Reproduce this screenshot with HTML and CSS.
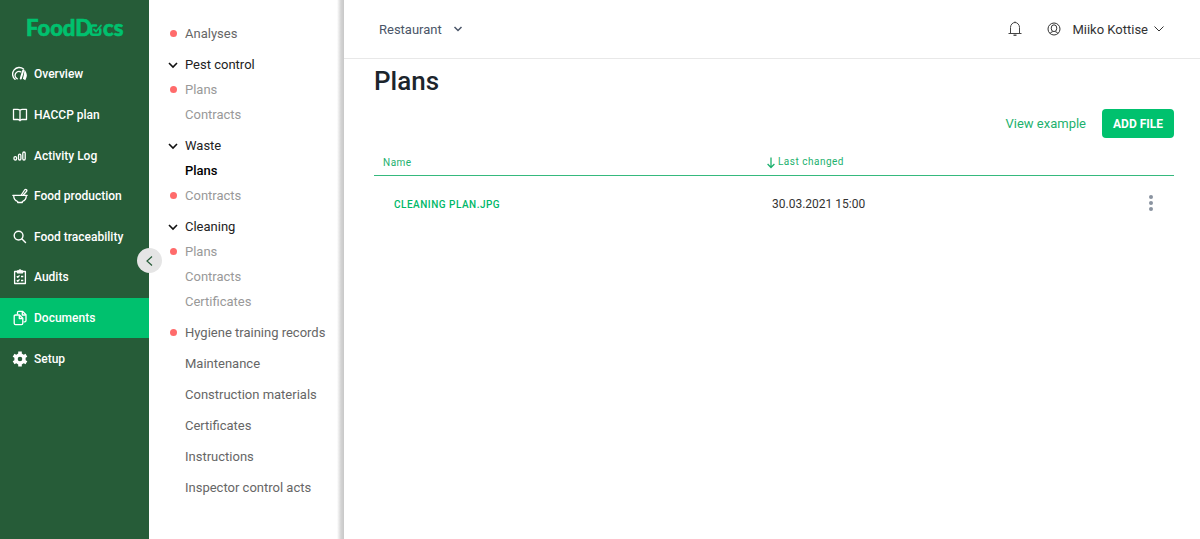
FILE: index.html
```html
<!DOCTYPE html>
<html lang="en">

<head>
  <meta charset="utf8">
  <meta name="viewport" content="width=device-width, initial-scale=1.0">
  <title>FoodDocs - Plans</title>
  <link rel="stylesheet" href="styles.css">
</head>

<body>
  <div class="app">
    <aside class="sidebar">
      <a class="logo" href="#" aria-label="FoodDocs">
        <svg width="110" height="36" viewBox="0 0 110 36">
          <text x="1" y="26">FoodD</text>
          <g fill="none" stroke="currentColor" stroke-width="2.6" stroke-linecap="round" stroke-linejoin="round">
            <path d="M71 15.500h-3q-2 0-2 2v5q0 2.200 2 2.200h5q2.200 0 2.200-2.200v-3" />
            <path d="M69 19.500l2 2 5-6" stroke-width="1.800" />
          </g>
          <text x="78" y="26">cs</text>
        </svg>
      </a>
      <nav class="nav">
        <a href="#">
          <svg width="16" height="16" viewBox="0 0 16 16" fill="none" stroke="currentColor" stroke-width="1.400" stroke-linecap="round">
            <path d="M3 13.200A6.300 6.300 0 0 1 11.500 3" />
            <path d="M5.300 12.800A3.800 3.800 0 0 1 8.800 5.800" />
            <path d="M11.200 4.500L8.800 12.500" stroke-width="2" />
            <path d="M13 5.500q2.300 3.700 0 7.700l-1.300-.7q.9-3.500 1.300-7z" fill="currentColor" />
          </svg>
          Overview
        </a>
        <a href="#">
          <svg width="16" height="16" viewBox="0 0 16 16" fill="none" stroke="currentColor" stroke-width="1.300" stroke-linejoin="round">
            <path d="M8 3.200q-1-.9-2.500-.9H1.500v10.200h4.500q1.300 0 2 1.200.700-1.200 2-1.200h4.500V2.300h-4Q9 2.300 8 3.200zV13.500" />
          </svg>
          HACCP plan
        </a>
        <a href="#">
          <svg width="16" height="16" viewBox="0 0 16 16" fill="none" stroke="currentColor" stroke-width="1.300">
            <rect x="2" y="8.600" width="2.600" height="3.400" rx="1.200" />
            <rect x="6.500" y="6.200" width="2.400" height="5.800" rx="1.200" />
            <rect x="10.800" y="4" width="2.400" height="8" rx="1.200" />
          </svg>
          Activity Log
        </a>
        <a href="#">
          <svg width="16" height="16" viewBox="0 0 16 16" fill="none" stroke="currentColor" stroke-width="1.300" stroke-linecap="round" stroke-linejoin="round">
            <path d="M.8 7.300h14.400M1.700 7.500c0 3.500 1.800 5.300 4 6v1h4.600v-1c2.200-.7 4-2.500 4-6" />
            <path d="M9.300 7l3.300-5q1-1 1.900-.3.800.8-.1 1.800L11.300 7" />
          </svg>
          Food production
        </a>
        <a href="#">
          <svg width="16" height="16" viewBox="0 0 16 16" fill="none" stroke="currentColor" stroke-width="1.400" stroke-linecap="round">
            <circle cx="6.600" cy="6.600" r="4.400" />
            <path d="M10 10l3.500 3.500" />
          </svg>
          Food traceability
        </a>
        <a href="#">
          <svg width="16" height="16" viewBox="0 0 16 16" fill="none" stroke="currentColor" stroke-width="1.300" stroke-linejoin="round">
            <path d="M5.500 2.500H2.600v12h10.800v-12h-2.900" />
            <path d="M5.500 1.800h1.300q1.200-1.800 2.400 0h1.300v2h-5z" fill="currentColor" />
            <path d="M4.800 7.300l1 1 1.700-2M4.800 11.300l1 1 1.700-2M9 7.500h2.300M9 11.500h2.300" />
          </svg>
          Audits
        </a>
        <a class="active" href="#">
          <svg width="16" height="16" viewBox="0 0 16 16" fill="none" stroke="currentColor" stroke-width="1.300" stroke-linejoin="round">
            <path d="M5.500 4.500V2.500q0-1.200 1.200-1.200h3.800l3.500 3.500v5.700q0 1.300-1.300 1.300h-1.200" />
            <path d="M10.300 1.500v3.500h3.500" />
            <path d="M7.500 5H3.500Q2.200 5 2.200 6.300v7q0 1.300 1.300 1.300h6q1.300 0 1.300-1.300V8.300z" />
            <path d="M7.300 5.200v3.300h3.300" />
          </svg>
          Documents
        </a>
        <a href="#">
          <svg width="16" height="16" viewBox="0 0 16 16" fill="none" stroke="currentColor">
            <circle cx="8" cy="8" r="4" stroke-width="3.400" />
            <path d="M8 .6v3M8 12.400v3M1.600 4.300l2.600 1.500M11.800 10.200l2.600 1.500M1.600 11.700l2.600-1.500M11.800 5.800l2.600-1.500" stroke-width="3.600" />
          </svg>
          Setup
        </a>
      </nav>
      <button class="collapse" type="button" aria-label="Collapse menu">
        <svg width="12" height="12" viewBox="0 0 12 12" fill="none" stroke="currentColor" stroke-width="1.200">
          <path d="M8 1.500L3 6l5 4.500" />
        </svg>
      </button>
    </aside>

    <nav class="submenu">
      <a class="item alert" href="#">Analyses</a>
      <a class="item group" href="#"><svg width="10" height="8" viewBox="0 0 10 8"><path d="M1 2l4 4 4-4" /></svg>Pest control</a>
      <a class="sub alert" href="#">Plans</a>
      <a class="sub" href="#">Contracts</a>
      <a class="item group" href="#"><svg width="10" height="8" viewBox="0 0 10 8"><path d="M1 2l4 4 4-4" /></svg>Waste</a>
      <a class="sub current" href="#">Plans</a>
      <a class="sub alert" href="#">Contracts</a>
      <a class="item group" href="#"><svg width="10" height="8" viewBox="0 0 10 8"><path d="M1 2l4 4 4-4" /></svg>Cleaning</a>
      <a class="sub alert" href="#">Plans</a>
      <a class="sub" href="#">Contracts</a>
      <a class="sub" href="#">Certificates</a>
      <a class="item alert" href="#">Hygiene training records</a>
      <a class="item" href="#">Maintenance</a>
      <a class="item" href="#">Construction materials</a>
      <a class="item" href="#">Certificates</a>
      <a class="item" href="#">Instructions</a>
      <a class="item" href="#">Inspector control acts</a>
    </nav>

    <div class="content">
      <header class="topbar">
        <button class="place" type="button">
          Restaurant
          <svg width="10" height="8" viewBox="0 0 10 8" fill="none" stroke="currentColor" stroke-width="1.500"><path d="M1.500 2L5 5.500 8.500 2" /></svg>
        </button>
        <button class="bell" type="button" aria-label="Notifications">
          <svg width="14" height="16" viewBox="0 0 14 16" fill="none" stroke="currentColor">
            <path d="M.5 12.500h13M2.500 12.500V6.500a4.500 5 0 0 1 9 0v6M7 .5v1" />
            <path d="M5.500 14.200h3" stroke-width="1.400" />
          </svg>
        </button>
        <button class="user" type="button">
          <svg width="14" height="14" viewBox="0 0 14 14" fill="none" stroke="currentColor">
            <circle cx="7" cy="7" r="6" />
            <ellipse cx="7" cy="6.200" rx="2.800" ry="3.400" />
            <path d="M3 11.500q.3-1.200 2.700-1.800M11 11.500q-.3-1.200-2.700-1.800" />
          </svg>
          <span>Miiko Kottise</span>
          <svg width="10" height="8" viewBox="0 0 10 8" fill="none" stroke="currentColor"><path d="M.5 1.500L5 6l4.500-4.500" /></svg>
        </button>
      </header>

      <main class="page">
        <h1>Plans</h1>
        <div class="actions">
          <a href="#">View example</a>
          <button class="add" type="button">ADD FILE</button>
        </div>
        <table class="files">
          <thead>
            <tr>
              <th class="name">Name</th>
              <th class="changed">
                <svg width="8" height="12" viewBox="0 0 8 12" fill="none" stroke="currentColor" stroke-width="1.300"><path d="M4 .5v10M.6 7L4 10.500 7.400 7" /></svg>
                Last changed
              </th>
              <th class="menu"></th>
            </tr>
          </thead>
          <tbody>
            <tr>
              <td><a href="#">CLEANING PLAN.JPG</a></td>
              <td>30.03.2021 15:00</td>
              <td class="menu">
                <button type="button" aria-label="File options">
                  <svg width="4" height="16" viewBox="0 0 4 16" fill="currentColor">
                    <circle cx="2" cy="2" r="2" />
                    <circle cx="2" cy="8" r="2" />
                    <circle cx="2" cy="14" r="2" />
                  </svg>
                </button>
              </td>
            </tr>
          </tbody>
        </table>
      </main>
    </div>
  </div>
</body>

</html>
```
FILE: styles.css
```css
html,
body {
  margin: 0;
}

body {
  font-family: Roboto, Arial, sans-serif;
  font-size: 13px;
  color: #333;
  background-color: #fff;
}

a {
  color: inherit;
  text-decoration: none;
}

button {
  padding: 0;
  border: 0;
  background: none;
  font: inherit;
  color: inherit;
  cursor: pointer;
}

svg {
  flex: none;
}

.app {
  display: flex;
  min-height: 100vh;
}

.sidebar {
  position: relative;
  flex: none;
  width: 149px;
  color: #fff;
  background-color: #265c38;
}

.logo {
  display: flex;
  padding: 10px 0 8px 25px;
  color: #00c16e;
}

.logo text {
  font-family: Lato, sans-serif;
  font-size: 22px;
  font-weight: 900;
  fill: currentColor;
  stroke: currentColor;
  stroke-width: 0.6;
}

.nav {
  display: grid;
  grid-auto-rows: 1fr;
  height: 325px;
}

.nav a {
  display: flex;
  align-items: center;
  gap: 6px;
  padding-left: 12px;
  font-size: 12px;
  font-weight: 500;
}

.nav .active {
  background-color: #00c16e;
}

/* sits over the edge between the two menus */
.collapse {
  position: absolute;
  top: 248px;
  right: -13px;
  z-index: 1;
  display: flex;
  align-items: center;
  justify-content: center;
  width: 25px;
  height: 25px;
  border-radius: 50%;
  color: #265c38;
  background-color: #e5e5e5;
}

.submenu {
  flex: none;
  box-sizing: border-box;
  width: 195px;
  padding-top: 15px;
  line-height: 25px;
  background: linear-gradient(to left, #c8c8c8, #d4d4d4 3px, #fff 7px);
}

.submenu a {
  display: flex;
  align-items: center;
  padding-left: 36px;
}

.submenu .item {
  margin-top: 6px;
  color: #666;
}

.submenu .sub {
  color: #999;
}

.submenu .alert::before {
  content: '';
  width: 7px;
  height: 7px;
  margin-right: 8px;
  border-radius: 50%;
  background-color: #ff6b6b;
}

.submenu .alert {
  padding-left: 21px;
}

.submenu .group {
  gap: 7px;
  padding-left: 19px;
  color: #222;
}

.submenu .group svg {
  fill: none;
  stroke: #111;
  stroke-width: 1.6;
}

.submenu .current {
  font-weight: 500;
  color: #000;
}

.content {
  flex: 1;
}

.topbar {
  display: flex;
  align-items: center;
  height: 58px;
  padding: 0 36px 0 35px;
  border-bottom: 1px solid #e8e8e8;
}

.place,
.user {
  display: flex;
  align-items: center;
}

.place {
  gap: 11px;
  margin-right: auto;
  color: #4a5568;
}

.bell {
  display: flex;
  margin-right: 25px;
  color: #444;
}

.user {
  gap: 6px;
}

.user span {
  margin-left: 5px;
}

.page {
  padding: 7px 26px 0 30px;
}

h1 {
  margin: 0;
  font-size: 26px;
  line-height: 30px;
  font-weight: 500;
  color: #1c252c;
}

.actions {
  display: flex;
  align-items: center;
  justify-content: flex-end;
  gap: 16px;
  margin-top: 13px;
  color: #1db16e;
}

.add {
  height: 29px;
  padding: 0 11px;
  border-radius: 4px;
  font-size: 12px;
  font-weight: 700;
  color: #fff;
  background-color: #00c16e;
}

.files {
  width: 100%;
  margin-top: 12px;
  border-collapse: collapse;
  table-layout: fixed;
}

.files th {
  height: 25px;
  padding: 0 0 0 9px;
  border-bottom: 1px solid #35b97d;
  font-size: 10px;
  font-weight: 400;
  letter-spacing: 0.5px;
  text-align: left;
  color: #1db16e;
}

.files .name {
  width: 48%;
}

.files .changed {
  padding-left: 0;
}

.changed svg {
  vertical-align: middle;
}

.files td {
  height: 56px;
  padding: 0 0 0 5px;
  font-size: 12px;
}

.files td:first-child {
  padding-left: 20px;
}

.files td a {
  font-size: 10px;
  font-weight: 500;
  letter-spacing: 0.5px;
  color: #00b868;
}

.files .menu {
  width: 60px;
  padding-right: 21px;
  text-align: right;
  color: #8a93a0;
}

.menu svg {
  display: block;
}
```
